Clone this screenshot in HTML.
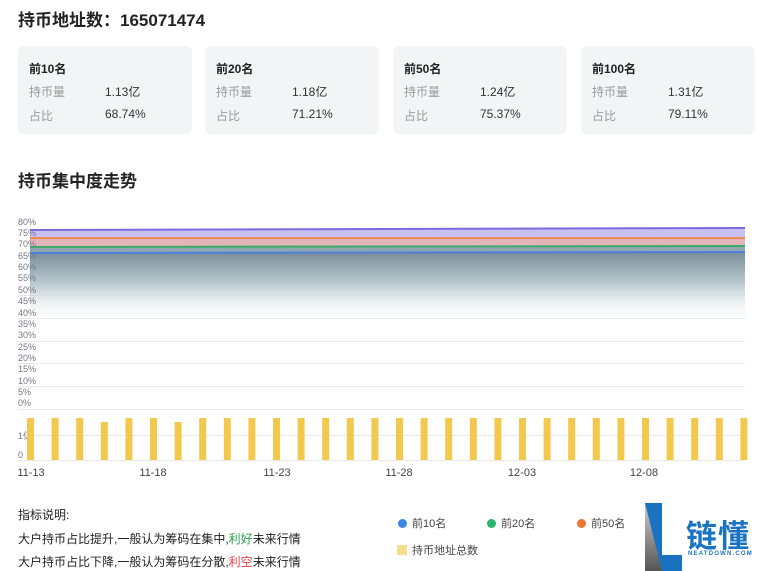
<!DOCTYPE html>
<html><head><meta charset="utf-8"><style>
body{margin:0;width:758px;height:571px;background:#fff;font-family:"Liberation Sans","Noto Sans CJK SC",sans-serif;position:relative;overflow:hidden;color:#222}
.t{position:absolute;font-weight:bold;font-size:17px;left:18px}
.card{position:absolute;top:46px;width:174px;height:88px;background:#f3f4f6;border-radius:6px}
.card b{position:absolute;left:11px;top:14px;font-size:12px}
.card .l{position:absolute;left:11px;font-size:12px;color:#999}
.card .v{position:absolute;left:87px;font-size:12px;color:#333}
.note{position:absolute;left:18px;font-size:12px;color:#222}
.lg{position:absolute;font-size:11px;color:#444}
.dot{display:inline-block;width:9px;height:9px;border-radius:50%;margin-right:5px;vertical-align:-1px}
</style></head><body>
<div class="t" style="top:6px">持币地址数：165071474</div>
<div class="card" style="left:18px"><b>前10名</b><span class="l" style="top:37px">持币量</span><span class="v" style="top:37px">1.13亿</span><span class="l" style="top:61px">占比</span><span class="v" style="top:61px">68.74%</span></div>
<div class="card" style="left:205px"><b>前20名</b><span class="l" style="top:37px">持币量</span><span class="v" style="top:37px">1.18亿</span><span class="l" style="top:61px">占比</span><span class="v" style="top:61px">71.21%</span></div>
<div class="card" style="left:393px"><b>前50名</b><span class="l" style="top:37px">持币量</span><span class="v" style="top:37px">1.24亿</span><span class="l" style="top:61px">占比</span><span class="v" style="top:61px">75.37%</span></div>
<div class="card" style="left:581px"><b>前100名</b><span class="l" style="top:37px">持币量</span><span class="v" style="top:37px">1.31亿</span><span class="l" style="top:61px">占比</span><span class="v" style="top:61px">79.11%</span></div>
<div class="t" style="top:167px">持币集中度走势</div>
<svg style="position:absolute;left:0;top:0" width="758" height="571">
<defs><linearGradient id="g" x1="0" y1="0" x2="0" y2="1"><stop offset="0" stop-color="#7a8f99"/><stop offset="0.45" stop-color="#bccbd2"/><stop offset="1" stop-color="#fff" stop-opacity="0"/></linearGradient></defs>
<g stroke="#e8e8e8" stroke-width="1">
<line x1="18" x2="745" y1="295.5" y2="295.5"/><line x1="18" x2="745" y1="318.5" y2="318.5"/><line x1="18" x2="745" y1="341.5" y2="341.5"/><line x1="18" x2="745" y1="363.5" y2="363.5"/><line x1="18" x2="745" y1="386.5" y2="386.5"/><line x1="18" x2="745" y1="409.5" y2="409.5"/><line x1="18" x2="745" y1="435.5" y2="435.5"/><line x1="18" x2="745" y1="460.5" y2="460.5"/></g>
<rect x="30" y="253" width="715" height="70" fill="url(#g)"/>
<rect x="30" y="229" width="715" height="9" fill="#c9bff0"/>
<rect x="30" y="238" width="715" height="9" fill="#e2b5b8"/>
<rect x="30" y="247" width="715" height="6" fill="#8fa8b0"/>
<path d="M30 230L745 228" stroke="#7b6be0" stroke-width="2"/>
<path d="M30 238L745 238" stroke="#ef8a5a" stroke-width="2"/>
<path d="M30 247L745 246" stroke="#3daa6a" stroke-width="2"/>
<path d="M30 253L745 252" stroke="#4f7fd8" stroke-width="2"/>
<g font-size="9" fill="#778" font-family="Liberation Sans,sans-serif">
<text x="18" y="225">80%</text><text x="18" y="236">75%</text><text x="18" y="247">70%</text><text x="18" y="259">65%</text><text x="18" y="270">60%</text><text x="18" y="281">55%</text><text x="18" y="293">50%</text><text x="18" y="304">45%</text><text x="18" y="316">40%</text><text x="18" y="327">35%</text><text x="18" y="338">30%</text><text x="18" y="350">25%</text><text x="18" y="361">20%</text><text x="18" y="372">15%</text><text x="18" y="384">10%</text><text x="18" y="395">5%</text><text x="18" y="406">0%</text>
<text x="18" y="439">1亿</text><text x="18" y="458">0</text></g>
<g fill="#f2c94c">
<rect x="27" y="418" width="7" height="42"/><rect x="51.6" y="418" width="7" height="42"/><rect x="76.2" y="418" width="7" height="42"/><rect x="100.8" y="422" width="7" height="38"/><rect x="125.4" y="418" width="7" height="42"/><rect x="150" y="418" width="7" height="42"/><rect x="174.6" y="422" width="7" height="38"/><rect x="199.2" y="418" width="7" height="42"/><rect x="223.8" y="418" width="7" height="42"/><rect x="248.4" y="418" width="7" height="42"/><rect x="273" y="418" width="7" height="42"/><rect x="297.6" y="418" width="7" height="42"/><rect x="322.2" y="418" width="7" height="42"/><rect x="346.8" y="418" width="7" height="42"/><rect x="371.4" y="418" width="7" height="42"/><rect x="396" y="418" width="7" height="42"/><rect x="420.6" y="418" width="7" height="42"/><rect x="445.2" y="418" width="7" height="42"/><rect x="469.8" y="418" width="7" height="42"/><rect x="494.4" y="418" width="7" height="42"/><rect x="519" y="418" width="7" height="42"/><rect x="543.6" y="418" width="7" height="42"/><rect x="568.2" y="418" width="7" height="42"/><rect x="592.8" y="418" width="7" height="42"/><rect x="617.4" y="418" width="7" height="42"/><rect x="642" y="418" width="7" height="42"/><rect x="666.6" y="418" width="7" height="42"/><rect x="691.2" y="418" width="7" height="42"/><rect x="715.8" y="418" width="7" height="42"/><rect x="740.4" y="418" width="7" height="42"/></g>
<g font-size="11" fill="#444" text-anchor="middle" font-family="Liberation Sans,sans-serif">
<text x="31" y="476">11-13</text><text x="153" y="476">11-18</text><text x="277" y="476">11-23</text><text x="399" y="476">11-28</text><text x="522" y="476">12-03</text><text x="644" y="476">12-08</text></g>
<defs><linearGradient id="lg2" x1="0" y1="0" x2="0" y2="1"><stop offset="0" stop-color="#ccc"/><stop offset="1" stop-color="#555"/></linearGradient></defs>
<polygon points="645,503 662,503 662,555 682,555 682,571 645,571" fill="#1a73c0"/>
<polygon points="645,503 662,571 645,571" fill="url(#lg2)"/>
</svg>
<div class="note" style="top:506px">指标说明:</div>
<div class="note" style="top:530px">大户持币占比提升,一般认为筹码在集中,<span style="color:#2ba24c">利好</span>未来行情</div>
<div class="note" style="top:553px">大户持币占比下降,一般认为筹码在分散,<span style="color:#e0424a">利空</span>未来行情</div>
<div class="lg" style="left:398px;top:515px"><span class="dot" style="background:#3a86e0"></span>前10名</div>
<div class="lg" style="left:487px;top:515px"><span class="dot" style="background:#2bb56a"></span>前20名</div>
<div class="lg" style="left:577px;top:515px"><span class="dot" style="background:#ef7434"></span>前50名</div>
<div class="lg" style="left:397px;top:542px"><span style="display:inline-block;width:10px;height:10px;background:#f7dc8a;margin-right:5px;vertical-align:-1px"></span>持币地址总数</div>
<div style="position:absolute;left:686px;top:511px;font-size:31px;font-weight:bold;color:#1a73c0;letter-spacing:1px">链懂</div>
<div style="position:absolute;left:688px;top:551px;font-size:6px;font-weight:bold;color:#1a73c0;letter-spacing:1.2px">NEATDOWN.COM</div>
</body></html>
